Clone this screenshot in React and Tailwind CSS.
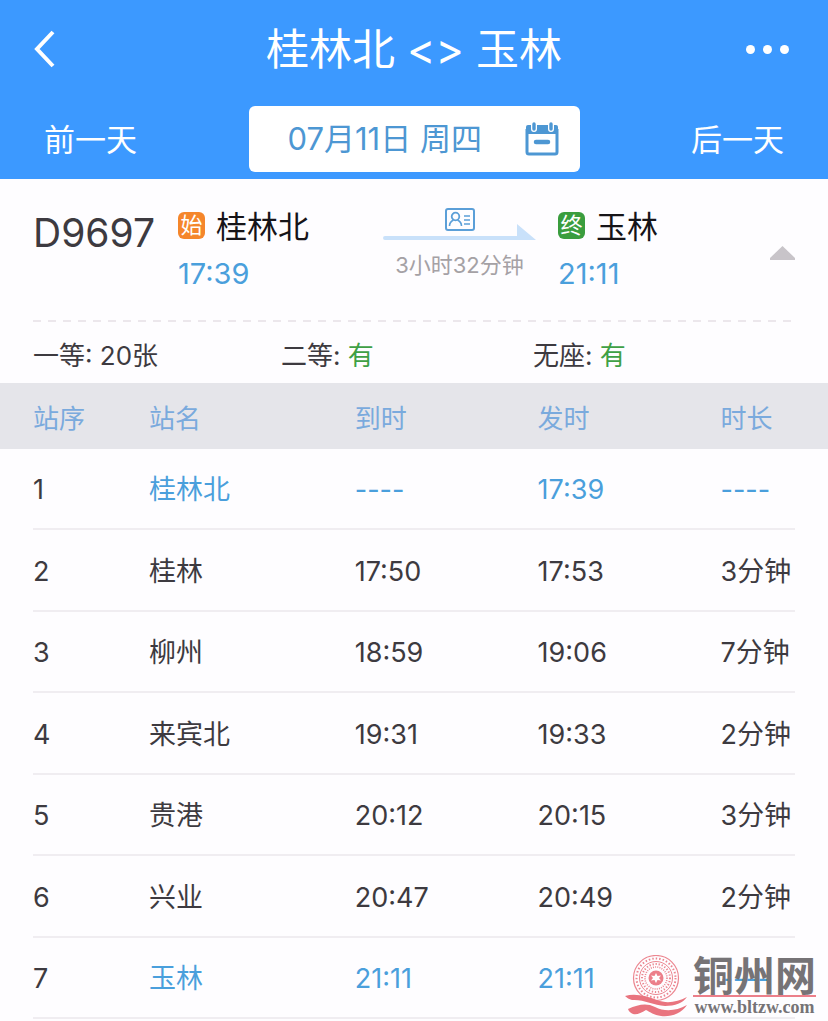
import React, { useState } from 'react';

const stops = [
  { no: 1, name: '桂林北', arrive: '----', depart: '17:39', stay: '----', terminal: true },
  { no: 2, name: '桂林', arrive: '17:50', depart: '17:53', stay: '3分钟' },
  { no: 3, name: '柳州', arrive: '18:59', depart: '19:06', stay: '7分钟' },
  { no: 4, name: '来宾北', arrive: '19:31', depart: '19:33', stay: '2分钟' },
  { no: 5, name: '贵港', arrive: '20:12', depart: '20:15', stay: '3分钟' },
  { no: 6, name: '兴业', arrive: '20:47', depart: '20:49', stay: '2分钟' },
  { no: 7, name: '玉林', arrive: '21:11', depart: '21:11', stay: '----', terminal: true },
];

const seats = [
  { label: '一等', value: '20张' },
  { label: '二等', value: '有', available: true },
  { label: '无座', value: '有', available: true },
];

const App = () => {
  const [open, setOpen] = useState(true);

  return (
    <div className="relative min-h-screen bg-[#fefdff] font-[Inter,'Noto_Sans_CJK_SC',sans-serif] text-[27px] text-[#3d3a40]">
      <Header />

      <main>
        {/* TRAIN SUMMARY */}
        <section className="px-[33px]">
          <div className="flex h-[141px] pt-6">
            <h2 className="w-[145px] pt-1 text-[39px] leading-[52px]">D9697</h2>
            <div className="w-[205px]">
              <Station badge="始" color="bg-[#f5862b]" name="桂林北" time="17:39" />
            </div>
            <div className="flex w-[153px] flex-col items-center pt-1">
              <IdCardIcon />
              <svg className="-mt-2 h-[18px] w-full" viewBox="0 0 153 18" fill="#c9e1fa">
                <path d="M2 13h132V1l19 16H2a2 2 0 0 1 0-4z" />
              </svg>
              <p className="mt-2 text-[22px] leading-8 whitespace-nowrap text-[#a5a1a5]">3小时32分钟</p>
            </div>
            <div className="ml-[22px]">
              <Station badge="终" color="bg-[#3a9d3e]" name="玉林" time="21:11" />
            </div>
            <button
              className="mt-10 ml-auto h-5"
              aria-label="展开或收起"
              aria-expanded={open}
              onClick={() => setOpen(!open)}
            >
              <svg className={open ? 'h-[14px] w-[25px]' : 'h-[14px] w-[25px] rotate-180'} viewBox="0 0 25 14" fill="#c8c4c9">
                <path d="M12.5 0 25 12v2H0v-2z" />
              </svg>
            </button>
          </div>
          <div className="h-0.5 bg-[repeating-linear-gradient(90deg,#ece7ec_0_8px,transparent_8px_15px)]" />
          <ul className="grid h-[61px] grid-cols-[248px_252px_1fr] items-center pt-1.5 text-[26px]">
            {seats.map((seat) => (
              <li key={seat.label}>
                {seat.label}: <span className={seat.available ? 'text-[#3fa045]' : ''}>{seat.value}</span>
              </li>
            ))}
          </ul>
        </section>

        {/* TIMETABLE */}
        {open && <Timetable />}
      </main>

      <Watermark />
    </div>
  );
};

const Header = () => (
  <header className="bg-[#3c99ff] pb-[7px] text-white">
    <div className="flex h-[106px] items-center justify-between px-[33px] pb-2">
      <button className="w-12" aria-label="返回">
        <svg className="h-[38px] w-[22px]" viewBox="0 0 22 38" fill="none" stroke="currentColor" strokeWidth="4">
          <path d="M20 2 4 19l16 17" />
        </svg>
      </button>
      <h1 className="text-[43px] leading-[60px]">桂林北 &lt;&gt; 玉林</h1>
      <button className="flex w-12 justify-end gap-2 pr-[6px]" aria-label="更多">
        <span className="size-[9px] shrink-0 rounded-full bg-white" />
        <span className="size-[9px] shrink-0 rounded-full bg-white" />
        <span className="size-[9px] shrink-0 rounded-full bg-white" />
      </button>
    </div>
    <div className="flex items-center justify-between px-11">
      <button className="pt-0.5 text-[31px]">前一天</button>
      <button className="flex h-[66px] w-[331px] items-center justify-between rounded-md bg-white pr-[21px] pl-[39px] text-[31px] text-[#4d97d3]">
        07月11日 周四
        <CalendarIcon />
      </button>
      <button className="pt-0.5 text-[31px]">后一天</button>
    </div>
  </header>
);

const Station = ({ badge, color, name, time }) => (
  <>
    <div className="flex items-center gap-[11px]">
      <span className={`-mt-1 flex size-[27px] items-center justify-center rounded-md text-[22px] leading-none text-white ${color}`}>
        {badge}
      </span>
      <span className="text-[31px] leading-[48px] text-[#161418]">{name}</span>
    </div>
    <div className="text-[29px] leading-[46px] text-[#4a9fdc]">{time}</div>
  </>
);

const Timetable = () => (
  <div className="px-[33px]">
    <table className="w-full table-fixed border-separate border-spacing-0 text-left">
      <colgroup>
        <col className="w-[116px]" />
        <col className="w-[27%]" />
        <col className="w-[24%]" />
        <col className="w-[24%]" />
        <col />
      </colgroup>
      <thead>
        {/* side shadows carry the band out to the page edges */}
        <tr className="h-[66px] bg-[#e5e5ea] text-[26px] text-[#7aaadd] [&>th]:p-0 [&>th]:pt-1">
          <th className="font-normal shadow-[-33px_0_0_#e5e5ea]">站序</th>
          <th className="font-normal">站名</th>
          <th className="font-normal">到时</th>
          <th className="font-normal">发时</th>
          <th className="font-normal shadow-[33px_0_0_#e5e5ea]">时长</th>
        </tr>
      </thead>
      <tbody>
        {stops.map((stop) => (
          <tr
            key={stop.no}
            className="whitespace-nowrap odd:h-[81px] even:h-[82px] [&>td]:border-b-2 [&>td]:border-[#f0edf1] [&>td]:p-0 [&>td]:pt-1"
          >
            <td>{stop.no}</td>
            <td className={stop.terminal ? 'text-[#4a9fdc]' : ''}>{stop.name}</td>
            <td className={stop.terminal ? 'text-[#4a9fdc]' : ''}>{stop.arrive}</td>
            <td className={stop.terminal ? 'text-[#4a9fdc]' : ''}>{stop.depart}</td>
            <td className={stop.terminal ? 'text-[#4a9fdc]' : ''}>{stop.stay}</td>
          </tr>
        ))}
      </tbody>
    </table>
  </div>
);

const CalendarIcon = () => (
  <svg className="h-[34px] w-[34px]" viewBox="0 0 34 34" fill="none">
    <path d="M2 7v23a2 2 0 0 0 2 2h26a2 2 0 0 0 2-2V7" stroke="#4d97d3" strokeWidth="3" />
    <path d="M1 5a2 2 0 0 1 2-2h28a2 2 0 0 1 2 2v7H1z" fill="#4d97d3" />
    <path d="M9 1v6M26 1v6" stroke="#fff" strokeWidth="6" strokeLinecap="round" />
    <path d="M9 2v5M26 2v5" stroke="#4d97d3" strokeWidth="3.4" strokeLinecap="round" />
    <path d="M11 20h12" stroke="#4d97d3" strokeWidth="4.5" strokeLinecap="round" />
  </svg>
);

const IdCardIcon = () => (
  <svg className="h-6 w-[30px]" viewBox="0 0 30 24" fill="none" stroke="#5b9fd8" strokeWidth="2">
    <rect x="1" y="2" width="28" height="21" rx="2" />
    <circle cx="10.5" cy="9.5" r="3.8" strokeWidth="1.8" />
    <path d="M4.5 19c0-3 2-5 4-6M16.5 19c0-3-2-5-4-6M19 9h6M19 13h6M19 17h6" strokeWidth="1.6" />
  </svg>
);

const Watermark = () => (
  <div className="pointer-events-none absolute right-3 bottom-1 flex items-end gap-1">
    <svg className="h-[62px] w-16" viewBox="0 0 64 62" fill="none">
      <circle cx="31" cy="23" r="23" fill="#fefdff" />
      <g stroke="#ec8690">
        <circle cx="31" cy="23" r="22.5" strokeWidth="1.2" />
        <circle cx="31" cy="23" r="19.5" strokeWidth="2" strokeDasharray="1.5 2" />
        <circle cx="31" cy="23" r="16.5" strokeWidth="1" />
        <circle cx="31" cy="23" r="14" strokeWidth="2" strokeDasharray="1.3 1.8" />
        <circle cx="31" cy="23" r="11" strokeWidth="1.6" strokeDasharray="1 1.2" />
      </g>
      <circle cx="31" cy="23" r="7.5" fill="#ec7f8a" />
      <path d="m31 18 1.5 3 3.5-.5-2 2.5 2 2.5-3.5-.5-1.5 3-1.5-3-3.5.5 2-2.5-2-2.5 3.5.5z" fill="#fff" />
      <path d="M0 41c10-3 22 0 32 4 10 4 20 2 30-3-4 6-12 9-22 9-12-1-22-7-33-6-3-1-5-2-7-4z" fill="#e9747f" />
      <path d="M3 54c11-5 19-6 27-2 10 5 21 4 32-2-6 9-16 12-26 11-7-1-11-4-15-6-5 3-9 5-13 4-2-1-4-2-5-5z" fill="#e9747f" />
    </svg>
    <div className="text-center text-[#767376]">
      <div className="font-['Noto_Sans_CJK_SC',sans-serif] text-[41px] leading-[44px] font-bold">铜州网</div>
      <div className="border-t-2 border-[#ec7f8a] font-['Liberation_Serif',serif] text-[18px] leading-5 font-bold">
        www.bltzw.com
      </div>
    </div>
  </div>
);

export default App;
